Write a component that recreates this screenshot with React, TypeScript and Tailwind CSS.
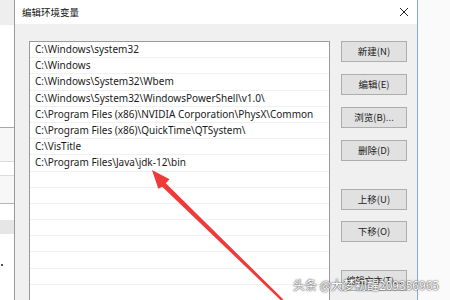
import React from 'react';

const paths = [
  'C:\\Windows\\system32',
  'C:\\Windows',
  'C:\\Windows\\System32\\Wbem',
  'C:\\Windows\\System32\\WindowsPowerShell\\v1.0\\',
  'C:\\Program Files (x86)\\NVIDIA Corporation\\PhysX\\Common',
  'C:\\Program Files (x86)\\QuickTime\\QTSystem\\',
  'C:\\VisTitle',
  'C:\\Program Files\\Java\\jdk-12\\bin',
];

const emptyRows = Array.from({ length: 10 });

function Btn({ label, className = '' }: { label: string; className?: string }) {
  return (
    <div
      className={`h-[21px] w-[66px] shrink-0 flex items-center justify-center bg-[#e1e1e1] border border-[#adadad] text-[9.5px] text-[#222] ${className}`}
    >
      {label}
    </div>
  );
}

export default function App() {
  return (
    <div
      className="relative w-[450px] h-[300px] overflow-hidden flex bg-[#fafafa]"
      style={{ fontFamily: '"Noto Sans", "Noto Sans CJK SC", sans-serif' }}
    >
      {/* window behind the dialog */}
      <div className="w-[14px] shrink-0 flex flex-col bg-white">
        <div className="h-[25px] shrink-0 bg-[#eeeeee]" />
        <div className="h-[102px] shrink-0" />
        <div className="h-px shrink-0 bg-[#a9a9a9]" />
        <div className="h-[33px] shrink-0 bg-[#f7f7f7]" />
        <div className="h-px shrink-0 bg-[#dcdcdc]" />
        <div className="h-[13px] shrink-0" />
        <div className="h-px shrink-0 bg-[#dcdcdc]" />
        <div className="h-[27px] shrink-0 bg-[#f7f7f7]" />
        <div className="h-px shrink-0 bg-[#b5b5b5]" />
        <div className="h-[16px] shrink-0" />
        <div className="h-[14px] shrink-0 bg-[#e6e6e6]" />
        <div className="h-[30px] shrink-0" />
        <div className="h-[2px] w-[2px] shrink-0 ml-[1px] bg-[#555]" />
      </div>

      {/* dialog */}
      <div className="w-[404px] shrink-0 flex flex-col border-l border-[#9a9a9a] border-r border-r-[#86a9d4]">
        <div className="h-[24px] shrink-0 bg-white flex items-center justify-between pl-[7px] pr-[8px]">
          <span
            className="text-[9.5px] text-[#111]"
            style={{ fontFamily: '"Noto Sans CJK SC", sans-serif' }}
          >
            编辑环境变量
          </span>
          <svg width="10" height="10" viewBox="0 0 10 10">
            <path d="M1 1L9 9M9 1L1 9" stroke="#222" strokeWidth="1" />
          </svg>
        </div>
        <div className="flex-1 min-h-0 bg-[#f0f0f0] flex items-start pt-[17px] pl-[14px]">
          <div className="w-[301px] h-[300px] shrink-0 bg-white border border-[#9a9a9a] flex flex-col">
            {paths.map((p) => (
              <div
                key={p}
                className="h-[16.2px] shrink-0 flex items-center pl-[5px] border-b border-[#f0f0f0] text-[10px] text-[#1a1a1a] whitespace-nowrap"
              >
                {p}
              </div>
            ))}
            {emptyRows.map((_, i) => (
              <div key={i} className="h-[16.2px] shrink-0 border-b border-[#f0f0f0]" />
            ))}
          </div>
          <div
            className="ml-[11px] flex flex-col"
            style={{ fontFamily: '"Noto Sans CJK SC", sans-serif' }}
          >
            <Btn label="新建(N)" />
            <Btn label="编辑(E)" className="mt-[12px]" />
            <Btn label="浏览(B)..." className="mt-[12px]" />
            <Btn label="删除(D)" className="mt-[12px]" />
            <Btn label="上移(U)" className="mt-[28px]" />
            <Btn label="下移(O)" className="mt-[11px]" />
            <Btn label="编辑文本(T)..." className="mt-[28px] text-[9px]" />
          </div>
        </div>
      </div>

      {/* red arrow */}
      <svg className="absolute left-0 top-0" width="450" height="300" viewBox="0 0 450 300">
        <polygon
          points="152,170 169.5,179.3 165.8,183.2 283.2,299.2 281.3,300.8 162.2,186.8 158.3,188.8"
          fill="#f03a3a"
        />
      </svg>

      {/* watermark */}
      <div
        className="absolute left-[293px] top-[276px] text-[12px] text-white whitespace-nowrap [text-shadow:0_0_2px_#444,0_0_1px_#444]"
        style={{ fontFamily: '"Noto Sans CJK SC", sans-serif' }}
      >
        头条 @大梦初醒209356965
      </div>
    </div>
  );
}
